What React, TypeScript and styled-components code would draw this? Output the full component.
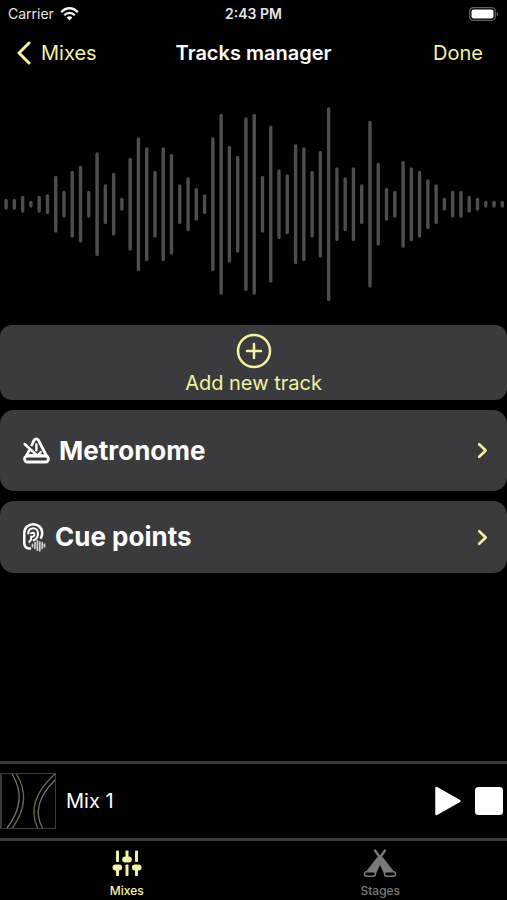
import React from "react";
import styled, { createGlobalStyle } from "styled-components";

const ACCENT = "#f3f2a0";
const PANEL = "#3b3b3d";

const GlobalStyle = createGlobalStyle`
  *, *::before, *::after { box-sizing: border-box; }
  body {
    margin: 0;
    background: #000;
    color: #fff;
    font-family: Inter, "Liberation Sans", sans-serif;
  }
  button { font: inherit; color: inherit; background: none; border: 0; padding: 0; cursor: pointer; }
  a { color: inherit; text-decoration: none; }
  svg { display: block; flex: none; }
  h1, h2 { margin: 0; }
`;

const Screen = styled.div`
  display: flex;
  flex-direction: column;
  min-height: 100vh;
`;

const ThreeColumns = styled.div`
  display: grid;
  grid-template-columns: 1fr auto 1fr;
  align-items: center;
`;

const StatusBar = styled(ThreeColumns)`
  height: 28px;
  padding: 0 8px;
  font-size: 14px;
  line-height: 16px;
  color: #e6e6e6;
`;

const Carrier = styled.div`
  display: flex;
  align-items: center;
  gap: 6px;
`;

const Clock = styled.time`
  font-weight: 600;
`;

const BatterySlot = styled.div`
  justify-self: end;
`;

const NavBar = styled(ThreeColumns).attrs({ as: "header" })`
  height: 50px;
  padding: 0 16px;
  font-size: 20px;
  line-height: 24px;
`;

const BackLink = styled.a`
  && { color: ${ACCENT}; }
  display: flex;
  align-items: center;
  gap: 10px;
`;

const NavTitle = styled.h1`
  font-size: 20px;
  font-weight: 600;
`;

const DoneButton = styled.button`
  && { color: ${ACCENT}; padding: 0 8px; }
  justify-self: end;
`;

const WaveArea = styled.div`
  padding: 26px 0 21px;
  svg { width: 100%; height: auto; }
`;

const Main = styled.main`
  flex: 1;
  display: flex;
  flex-direction: column;
`;

const Panels = styled.div`
  display: flex;
  flex-direction: column;
  gap: 10px;
`;

const AddButton = styled.button`
  && { color: ${ACCENT}; background: ${PANEL}; padding-top: 8px; }
  display: flex;
  flex-direction: column;
  align-items: center;
  gap: 2px;
  height: 75px;
  border-radius: 12px;
  font-size: 20px;
  line-height: 24px;
`;

const SectionButton = styled.button<{ $height: number }>`
  && { background: ${PANEL}; padding: 0 19px 0 22px; }
  display: flex;
  align-items: center;
  gap: 8px;
  height: ${(p) => p.$height}px;
  border-radius: 14px;
  text-align: left;
`;

const SectionTitle = styled.span`
  flex: 1;
  font-size: 26px;
  line-height: 32px;
  font-weight: 700;
`;

const Player = styled.section`
  display: flex;
  align-items: center;
  height: 77px;
  padding-right: 4px;
  border-top: 3px solid #3a3a3a;
`;

const MixName = styled.span`
  flex: 1;
  padding-left: 10px;
  font-size: 20px;
  line-height: 24px;
`;

const Controls = styled.div`
  display: flex;
  align-items: center;
  gap: 14px;
`;

const TabBar = styled.nav`
  display: grid;
  grid-template-columns: 1fr 1fr;
  height: 62px;
  border-top: 3px solid #3a3a3a;
`;

const Tab = styled.a<{ $active?: boolean }>`
  && { color: ${(p) => (p.$active ? ACCENT : "#7a7a7a")}; }
  display: flex;
  flex-direction: column;
  align-items: center;
  gap: 6px;
  padding-top: 8px;
  font-size: 12px;
  line-height: 16px;
  font-weight: 500;
`;

const BARS = [
  11, 11, 17, 7, 17, 20, 57, 27, 67, 77, 27, 104, 40, 63, 13, 93, 134, 114, 67, 114,
  101, 40, 54, 33, 20, 134, 181, 117, 97, 174, 181, 57, 157, 70, 60, 120, 114, 67,
  107, 194, 74, 54, 74, 40, 167, 83, 33, 27, 87, 74, 67, 50, 40, 13, 27, 27, 17, 13,
  7, 7, 7,
];

const Waveform = () => (
  <svg viewBox="0 0 507 200" aria-hidden="true" fill="#4e4e4e">
    {BARS.map((h, i) => (
      <rect key={i} x={4.4 + i * 8.27} y={100.3 - h / 2} width="3.4" height={h} rx="1.7" />
    ))}
  </svg>
);

const WifiIcon = () => (
  <svg width="19" height="14" viewBox="0 0 19 14" fill="none" stroke="#f4f4f4" strokeWidth="2.3">
    <path d="M1.2 5.2C6-.1 13-.1 17.8 5.2" />
    <path d="M4.2 8.3c3.2-3.2 7.400-3.2 10.600 0" />
    <path d="M6.600 10.500c1.800-1.600 4-1.600 5.800 0L9.500 13.600z" fill="#f4f4f4" stroke="none" />
  </svg>
);

const BatteryIcon = () => (
  <svg width="30" height="14" viewBox="0 0 30 14">
    <rect x=".7" y=".7" width="25.6" height="12.6" rx="3.6" fill="none" stroke="#626262" strokeWidth="1.3" />
    <rect x="2.5" y="2.4" width="22" height="9.2" rx="2" fill="#fff" />
    <path d="M27.7 4.8c1.8.5 1.8 3.9 0 4.4z" fill="#626262" />
  </svg>
);

const BackIcon = () => (
  <svg width="15" height="24" viewBox="0 0 15 24" fill="none" stroke="currentColor" strokeWidth="3" strokeLinecap="round" strokeLinejoin="round">
    <path d="M13 2 3 12l10 10" />
  </svg>
);

const ChevronIcon = () => (
  <svg width="11" height="17" viewBox="0 0 11 17" fill="none" stroke={ACCENT} strokeWidth="2.6" strokeLinecap="round" strokeLinejoin="round">
    <path d="m2.2 2.2 6.500 6.300-6.500 6.300" />
  </svg>
);

const PlusCircleIcon = () => (
  <svg width="36" height="36" viewBox="0 0 36 36" fill="none" stroke="currentColor" strokeWidth="2.5" strokeLinecap="round">
    <circle cx="18" cy="18" r="16" />
    <path d="M18 11v14M11 18h14" />
  </svg>
);

const MetronomeIcon = () => (
  <svg width="29" height="28" viewBox="0 0 29 28" fill="none" stroke="#fff" strokeLinecap="round" strokeLinejoin="round">
    <path d="M9.800 8 11.800 3.600Q14.200 0 16.700 3.600L24.500 19M7 13.800 4.500 18.500" strokeWidth="2.800" />
    <rect x="2.600" y="19" width="23.800" height="6" rx="2.800" strokeWidth="2.800" />
    <path d="M2.600 7 14.500 18" strokeWidth="2.400" />
    <path d="M14.400 7.500v5.800" strokeWidth="2.400" />
    <path d="M16.500 17.500 18.800 15" strokeWidth="2.200" />
    <path d="M7.500 18.500h13" strokeWidth="2.400" />
  </svg>
);

const EarIcon = () => (
  <svg width="25" height="30" viewBox="0 0 25 30" fill="none" stroke="#fff" strokeLinecap="round" strokeLinejoin="round">
    <path d="M8 26.500H6.700Q2.300 25.800 2.300 21V11.200C2.300-.8 20.200-.8 20.200 11.200q0 2.500-1.200 4.500" strokeWidth="2.500" />
    <path d="M6.300 11.500c0-7 9.700-7 9.700.2 0 3.400-1.700 5.400-4.300 6.600" strokeWidth="2.100" />
    <path d="M9 11.300q3-1.500 3.400.8c.3 1.800-1.500 3.200-3.300 2.500v2.800L7.300 20" strokeWidth="2" />
    <path d="M10.500 22.300v2.400M13 20.500v6M15.400 18.800v9.400M17.800 19.800v9M20.200 20.500v6M22.500 22.300v2.400" stroke="#d0d0d0" strokeWidth="1.700" />
  </svg>
);

const Artwork = () => (
  <svg width="56" height="56" viewBox="0 0 56 56" fill="none" aria-hidden="true">
    <rect x=".5" y=".5" width="55" height="55" stroke="#3c3c3c" />
    <path d="M1.500 0v56" stroke="#343434" />
    <path d="M12 1Q28.500 27 7 55M55 7C40 22 33 38 42.500 55" stroke="#707076" strokeWidth="1.300" />
    <path d="M16.500 1Q32.500 27 12.500 55M55 1C36 18 29 36 37.500 55" stroke="#6e6c4c" strokeWidth="1.300" />
  </svg>
);

const PlayIcon = () => (
  <svg width="27" height="30" viewBox="0 0 27 30">
    <path d="M2.500 2v26L25.500 15z" fill="#fff" stroke="#fff" strokeWidth="2.500" strokeLinejoin="round" />
  </svg>
);

const StopIcon = () => (
  <svg width="28" height="28" viewBox="0 0 28 28">
    <rect width="28" height="28" rx="3.5" fill="#fff" />
  </svg>
);

const SlidersIcon = () => (
  <svg width="30" height="28" viewBox="0 0 30 28" fill="currentColor">
    <rect x="4" y="1.500" width="3" height="11.500" rx=".8" />
    <rect x="4" y="17" width="3" height="10" rx=".8" />
    <rect x=".5" y="15.500" width="9.600" height="6" rx="3" />
    <rect x="13.500" y="1.500" width="3" height="9" rx=".8" />
    <rect x="13.500" y="15.500" width="3" height="11.500" rx=".8" />
    <rect x="10.200" y="7.500" width="9.600" height="6" rx="3" />
    <rect x="23" y="1.500" width="3" height="11.500" rx=".8" />
    <rect x="23" y="17" width="3" height="10" rx=".8" />
    <rect x="19.900" y="15.500" width="9.600" height="6" rx="3" />
  </svg>
);

const StagesIcon = () => (
  <svg width="34" height="28" viewBox="0 0 34 28">
    <path d="M12 1.500 18.500 10.500M22 1.500 15.500 10.500" stroke="currentColor" strokeWidth="2.400" strokeLinecap="round" />
    <path d="M14 8.500 17 6.500 20 8.500 32.500 24.500 22 27 17 16 12 27 1.500 24.500z" fill="currentColor" />
    <rect x="1.500" y="22.800" width="11" height="4.400" rx="2.200" fill="#000" stroke="currentColor" strokeWidth="1.500" />
    <rect x="21.500" y="22.800" width="11" height="4.400" rx="2.200" fill="#000" stroke="currentColor" strokeWidth="1.500" />
  </svg>
);

export default function App() {
  return (
    <>
      <GlobalStyle />
      <Screen>
        <StatusBar>
          <Carrier>
            Carrier
            <WifiIcon />
          </Carrier>
          <Clock>2:43 PM</Clock>
          <BatterySlot>
            <BatteryIcon />
          </BatterySlot>
        </StatusBar>
        <NavBar>
          <BackLink href="#mixes">
            <BackIcon />
            Mixes
          </BackLink>
          <NavTitle>Tracks manager</NavTitle>
          <DoneButton type="button">Done</DoneButton>
        </NavBar>
        <Main>
          <WaveArea>
            <Waveform />
          </WaveArea>
          <Panels>
            <AddButton type="button">
              <PlusCircleIcon />
              Add new track
            </AddButton>
            <SectionButton type="button" $height={81}>
              <MetronomeIcon />
              <SectionTitle>Metronome</SectionTitle>
              <ChevronIcon />
            </SectionButton>
            <SectionButton type="button" $height={72}>
              <EarIcon />
              <SectionTitle>Cue points</SectionTitle>
              <ChevronIcon />
            </SectionButton>
          </Panels>
        </Main>
        <Player aria-label="Player">
          <Artwork />
          <MixName>Mix 1</MixName>
          <Controls>
            <button type="button" aria-label="Play">
              <PlayIcon />
            </button>
            <button type="button" aria-label="Stop">
              <StopIcon />
            </button>
          </Controls>
        </Player>
        <TabBar>
          <Tab href="#mixes" $active aria-current="page">
            <SlidersIcon />
            Mixes
          </Tab>
          <Tab href="#stages">
            <StagesIcon />
            Stages
          </Tab>
        </TabBar>
      </Screen>
    </>
  );
}
